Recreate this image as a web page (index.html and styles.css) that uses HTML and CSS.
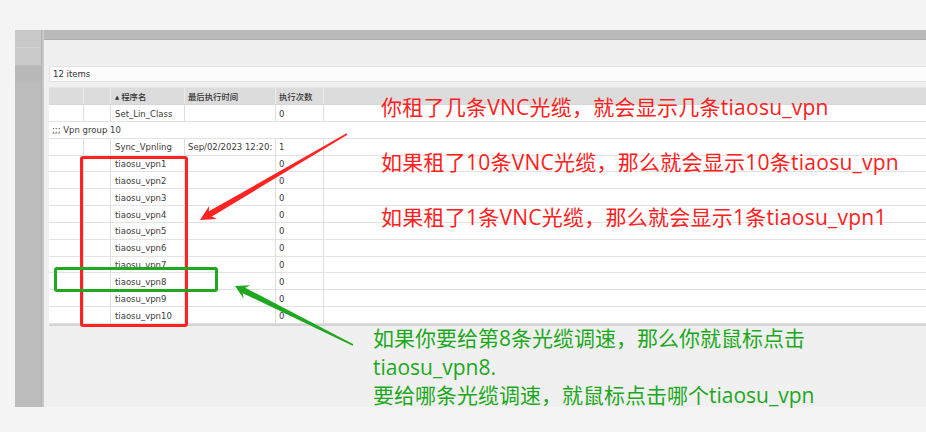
FILE: index.html
```html
<!DOCTYPE html>
<html lang="zh-CN">
<head>
<meta charset="utf-8">
<title>tiaosu_vpn</title>
<link rel="stylesheet" href="styles.css">
</head>
<body>
<div class="frame">
  <aside class="sidebar">
    <div class="seg seg-a"></div>
    <div class="seg seg-b"></div>
    <div class="seg seg-c"></div>
  </aside>
  <div class="strip"></div>
  <div class="main">
    <div class="topbar"></div>
    <div class="panel">
      <div class="items">12 items</div>
      <div class="table">
        <div class="row head">
          <div class="cell"></div>
          <div class="cell"></div>
          <div class="cell name"><span class="tri">▲</span>程序名</div>
          <div class="cell">最后执行时间</div>
          <div class="cell">执行次数</div>
          <div class="cell last"></div>
        </div>
        <div class="row">
          <div class="cell"></div><div class="cell"></div>
          <div class="cell name">Set_Lin_Class</div><div class="cell"></div>
          <div class="cell">0</div><div class="cell last"></div>
        </div>
        <div class="row group"><div class="cell">;;; Vpn group 10</div></div>
        <div class="row">
          <div class="cell"></div><div class="cell"></div>
          <div class="cell name">Sync_Vpnling</div><div class="cell">Sep/02/2023 12:20:</div>
          <div class="cell">1</div><div class="cell last"></div>
        </div>
        <div class="row"><div class="cell"></div><div class="cell"></div><div class="cell name">tiaosu_vpn1</div><div class="cell"></div><div class="cell">0</div><div class="cell last"></div></div>
        <div class="row"><div class="cell"></div><div class="cell"></div><div class="cell name">tiaosu_vpn2</div><div class="cell"></div><div class="cell">0</div><div class="cell last"></div></div>
        <div class="row"><div class="cell"></div><div class="cell"></div><div class="cell name">tiaosu_vpn3</div><div class="cell"></div><div class="cell">0</div><div class="cell last"></div></div>
        <div class="row"><div class="cell"></div><div class="cell"></div><div class="cell name">tiaosu_vpn4</div><div class="cell"></div><div class="cell">0</div><div class="cell last"></div></div>
        <div class="row"><div class="cell"></div><div class="cell"></div><div class="cell name">tiaosu_vpn5</div><div class="cell"></div><div class="cell">0</div><div class="cell last"></div></div>
        <div class="row"><div class="cell"></div><div class="cell"></div><div class="cell name">tiaosu_vpn6</div><div class="cell"></div><div class="cell">0</div><div class="cell last"></div></div>
        <div class="row"><div class="cell"></div><div class="cell"></div><div class="cell name">tiaosu_vpn7</div><div class="cell"></div><div class="cell">0</div><div class="cell last"></div></div>
        <div class="row"><div class="cell"></div><div class="cell"></div><div class="cell name">tiaosu_vpn8</div><div class="cell"></div><div class="cell">0</div><div class="cell last"></div></div>
        <div class="row"><div class="cell"></div><div class="cell"></div><div class="cell name">tiaosu_vpn9</div><div class="cell"></div><div class="cell">0</div><div class="cell last"></div></div>
        <div class="row"><div class="cell"></div><div class="cell"></div><div class="cell name">tiaosu_vpn10</div><div class="cell"></div><div class="cell">0</div><div class="cell last"></div></div>
      </div>
    </div>
  </div>
</div>

<div class="notes">
  <svg class="arrows" width="926" height="432" viewBox="0 0 926 432">
    <polygon fill="#ff2424" points="200,220 216.75,218.9 211.88,216.53 347.4,134.7 346.6,133.3 208.85,211.35 209.17,205.94"/>
    <polygon fill="#1fa81f" points="235,286 243.72,298.75 242.6,293.15 352.64,345.72 353.36,344.28 245.28,287.79 250.42,285.33"/>
  </svg>
  <div class="box red-box"></div>
  <div class="box green-box"></div>
  <div class="red-text">
    <div>你租了几条VNC光缆，就会显示几条tiaosu_vpn</div>
    <div>如果租了10条VNC光缆，那么就会显示10条tiaosu_vpn</div>
    <div>如果租了1条VNC光缆，那么就会显示1条tiaosu_vpn1</div>
  </div>
  <div class="green-text">
    <div>如果你要给第8条光缆调速，那么你就鼠标点击</div>
    <div>tiaosu_vpn8.</div>
    <div>要给哪条光缆调速，就鼠标点击哪个tiaosu_vpn</div>
  </div>
</div>
</body>
</html>
```

FILE: styles.css
```css
html, body {
  margin: 0;
  padding: 0;
}
body {
  width: 926px;
  height: 432px;
  overflow: hidden;
  position: relative;
  background: #f4f4f4;
  font-family: "DejaVu Sans", "Noto Sans CJK SC", sans-serif;
}
.frame {
  display: flex;
  margin: 30px 0 0 15px;
  height: 377px;
}
.sidebar {
  width: 26px;
  display: flex;
  flex-direction: column;
  background: #bcbcbc;
}
.seg {
  box-sizing: border-box;
}
.seg-a {
  height: 18px;
  background: #c9c9c9;
  border-bottom: 1px solid #d2d2d2;
}
.seg-b {
  height: 17px;
  background: #cacaca;
}
.seg-c {
  height: 18px;
  background: #b9b9b9;
}
.strip {
  width: 3px;
  background: #c8c8c8;
  border-left: 1px solid #b0b0b0;
  box-sizing: border-box;
}
.main {
  flex: 1;
  display: flex;
  flex-direction: column;
  background: #f0f0f0;
  min-width: 0;
}
.topbar {
  height: 9px;
  background: #bababa;
  border-bottom: 1px solid #acacac;
}
.panel {
  padding: 26px 0 0 5px;
}
.items {
  box-sizing: border-box;
  height: 16px;
  background: #fcfcfc;
  border: 1px solid #e3e3e3;
  border-right: 0;
  font-size: 8.5px;
  line-height: 15px;
  color: #333;
  padding-left: 3px;
  margin-bottom: 5px;
}
.table {
  background: #fff;
  border-bottom: 2px solid #d3d3d3;
}
.row {
  display: grid;
  grid-template-columns: 35px 27px 74px 91px 48px 1fr;
  height: 16.85px;
  box-sizing: border-box;
  border-bottom: 1px solid #e2e2e2;
  font-size: 8.5px;
  color: #3a3a3a;
}
.row.group {
  grid-template-columns: 1fr;
}
.cell {
  box-sizing: border-box;
  border-right: 1px solid #dedede;
  padding: 1.5px 3px 0;
  line-height: 15px;
  white-space: nowrap;
  overflow: hidden;
}
.cell.name {
  padding-left: 4px;
}
.cell.last,
.group .cell {
  border-right: 0;
}
.row.head {
  height: 18px;
  background: #dcdcdc;
  border-top: 1px solid #e6e6e6;
  border-bottom: 1px solid #d6d6d6;
  font-family: "Noto Sans CJK SC", sans-serif;
  font-weight: 500;
  font-size: 8.4px;
  color: #333;
}
.row.head .cell {
  border-right-color: #ececec;
  padding-top: 0;
  line-height: 16.5px;
}
.tri {
  font-family: "DejaVu Sans", sans-serif;
  font-size: 5.5px;
  margin-right: 2px;
  vertical-align: 1px;
}

/* annotation overlay */
.notes {
  position: absolute;
  left: 0;
  top: 0;
  width: 926px;
  height: 432px;
  pointer-events: none;
}
.arrows {
  position: absolute;
  left: 0;
  top: 0;
}
.box {
  position: absolute;
  box-sizing: border-box;
  border-radius: 3px;
}
.red-box {
  left: 80px;
  top: 156px;
  width: 108px;
  height: 171px;
  border: 3px solid #ff2222;
}
.green-box {
  left: 54px;
  top: 267px;
  width: 164px;
  height: 25px;
  border: 3px solid #20a820;
}
.red-text,
.green-text {
  position: absolute;
  font-family: "Open Sans", "Noto Sans CJK SC", sans-serif;
  font-size: 21px;
  white-space: nowrap;
}
.red-text {
  left: 381px;
  top: 95px;
  display: flex;
  flex-direction: column;
  gap: 31px;
  line-height: 24px;
  letter-spacing: 0.25px;
  color: #ff2020;
}
.green-text {
  left: 373px;
  top: 324px;
  line-height: 28.5px;
  color: #1ca81c;
}
```
